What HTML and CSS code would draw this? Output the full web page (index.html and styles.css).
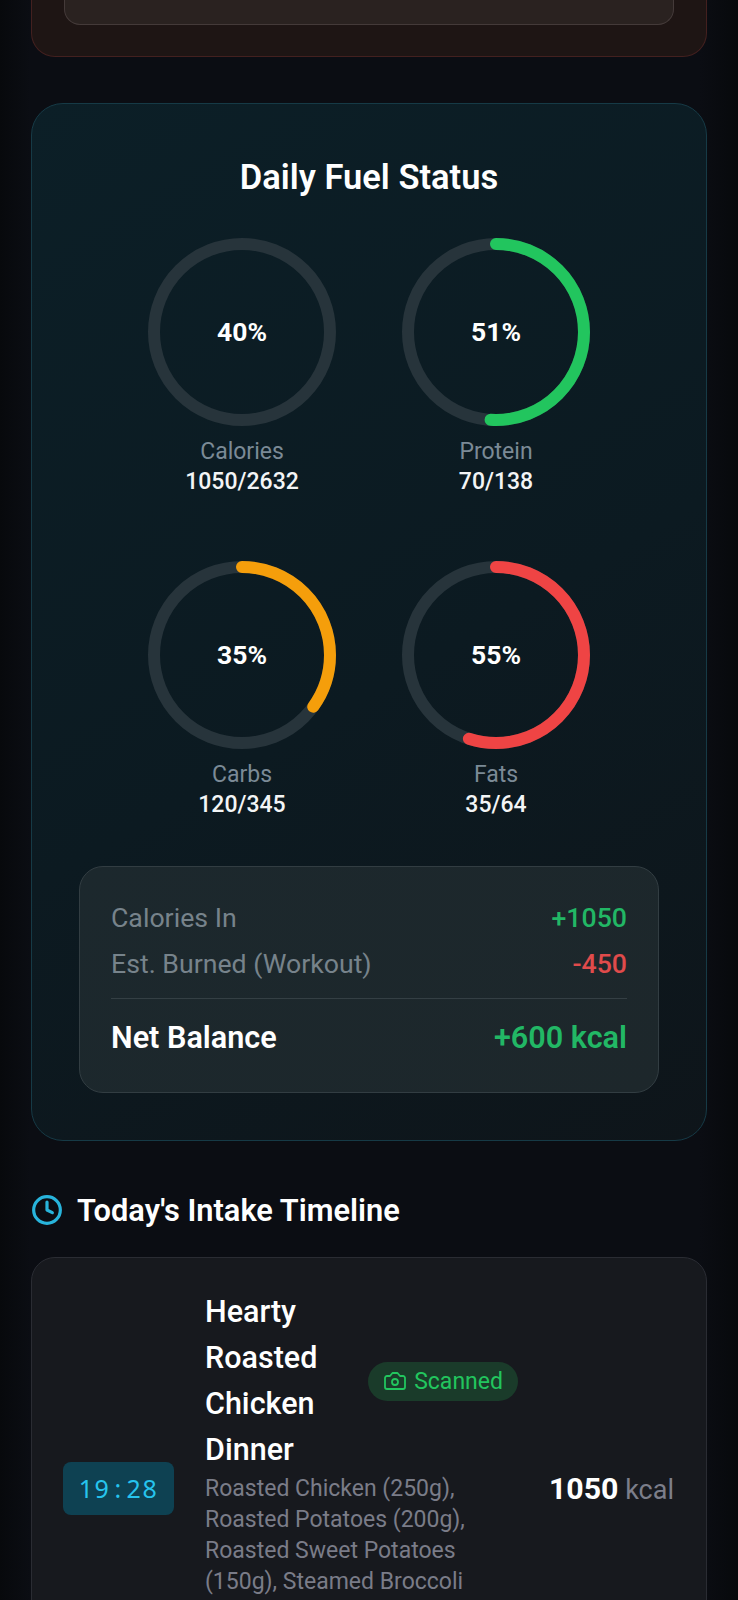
FILE: index.html
```html
<!DOCTYPE html>
<html lang="en">
<head>
    <meta charset="UTF-8">
    <title>Daily Fuel Status</title>
    <link rel="stylesheet" href="styles.css">
</head>
<body>
<div class="page">
    <div class="alert-card">
        <div class="alert-inner"></div>
    </div>

    <section class="fuel-card">
        <h2 class="fuel-title">Daily Fuel Status</h2>
        <div class="rings">
            <div class="ring-item">
                <div class="ring">
                    <svg viewBox="0 0 188 188" width="188" height="188">
                        <circle class="ring-track" cx="94" cy="94" r="88"></circle>
                    </svg>
                    <span class="ring-pct">40%</span>
                </div>
                <div class="ring-label">Calories</div>
                <div class="ring-value">1050/2632</div>
            </div>
            <div class="ring-item">
                <div class="ring">
                    <svg viewBox="0 0 188 188" width="188" height="188">
                        <circle class="ring-track" cx="94" cy="94" r="88"></circle>
                        <circle class="ring-arc arc-green" cx="94" cy="94" r="88" pathLength="100" stroke-dasharray="51 100" transform="rotate(-90 94 94)"></circle>
                    </svg>
                    <span class="ring-pct">51%</span>
                </div>
                <div class="ring-label">Protein</div>
                <div class="ring-value">70/138</div>
            </div>
            <div class="ring-item">
                <div class="ring">
                    <svg viewBox="0 0 188 188" width="188" height="188">
                        <circle class="ring-track" cx="94" cy="94" r="88"></circle>
                        <circle class="ring-arc arc-amber" cx="94" cy="94" r="88" pathLength="100" stroke-dasharray="35 100" transform="rotate(-90 94 94)"></circle>
                    </svg>
                    <span class="ring-pct">35%</span>
                </div>
                <div class="ring-label">Carbs</div>
                <div class="ring-value">120/345</div>
            </div>
            <div class="ring-item">
                <div class="ring">
                    <svg viewBox="0 0 188 188" width="188" height="188">
                        <circle class="ring-track" cx="94" cy="94" r="88"></circle>
                        <circle class="ring-arc arc-red" cx="94" cy="94" r="88" pathLength="100" stroke-dasharray="55 100" transform="rotate(-90 94 94)"></circle>
                    </svg>
                    <span class="ring-pct">55%</span>
                </div>
                <div class="ring-label">Fats</div>
                <div class="ring-value">35/64</div>
            </div>
        </div>

        <div class="balance">
            <div class="balance-row">
                <span class="balance-name">Calories In</span>
                <span class="balance-num green">+1050</span>
            </div>
            <div class="balance-row">
                <span class="balance-name">Est. Burned (Workout)</span>
                <span class="balance-num red">-450</span>
            </div>
            <div class="balance-net">
                <span>Net Balance</span>
                <span class="green">+600 kcal</span>
            </div>
        </div>
    </section>

    <h2 class="timeline-title">
        <svg class="clock" viewBox="0 0 24 24" width="32" height="32">
            <circle cx="12" cy="12" r="10"></circle>
            <path d="M12 6v6l4 2"></path>
        </svg>
        Today's Intake Timeline
    </h2>

    <section class="meal-card">
        <div class="meal-time">19<span class="colon">:</span>28</div>
        <div class="meal-body">
            <div class="meal-head">
                <div class="meal-name">Hearty Roasted Chicken Dinner</div>
                <div class="badge">
                    <svg viewBox="0 0 24 24" width="24" height="24">
                        <path d="M14.5 4h-5L7 7H4a2 2 0 0 0-2 2v9a2 2 0 0 0 2 2h16a2 2 0 0 0 2-2V9a2 2 0 0 0-2-2h-3l-2.500-3z"></path>
                        <circle cx="12" cy="13" r="3"></circle>
                    </svg>
                    Scanned
                </div>
            </div>
            <div class="meal-desc">Roasted Chicken (250g), Roasted Potatoes (200g), Roasted Sweet Potatoes (150g), Steamed Broccoli</div>
        </div>
        <div class="meal-kcal"><b>1050</b> kcal</div>
    </section>
</div>
</body>
</html>
```

FILE: styles.css
```css
* {
    margin: 0;
    padding: 0;
    box-sizing: border-box;
}
html, body {
    height: 1600px;
    overflow: hidden;
}
body {
    font-family: Roboto, "Noto Sans", sans-serif;
    color: #fff;
    background: linear-gradient(90deg, #07090c 0, #0b0d13 30px, #0b0d13 700px, #07090c 100%);
}
.page {
    padding: 0 31px;
}

/* card scrolled off the top */
.alert-card {
    height: 57px;
    padding: 0 32px;
    border: 1px solid #43201f;
    border-top: 0;
    border-radius: 0 0 24px 24px;
    background: #1e1514;
}
.alert-inner {
    height: 25px;
    border: 1px solid #443a39;
    border-top: 0;
    border-radius: 0 0 16px 16px;
    background: #2a2220;
}

.fuel-card {
    height: 1038px;
    margin-top: 46px;
    padding: 52px 47px 0;
    border: 1px solid #163a46;
    border-radius: 32px;
    background: linear-gradient(150deg, #0c1f27 0%, #0c1a21 55%, #0e151a 100%);
}
.fuel-title {
    font-size: 34.500px;
    font-weight: 600;
    line-height: 42px;
    text-align: center;
}
.rings {
    display: grid;
    grid-template-columns: 188px 188px;
    column-gap: 66px;
    row-gap: 65px;
    justify-content: center;
    margin-top: 40px;
}
.ring-item {
    text-align: center;
}
.ring {
    position: relative;
    width: 188px;
    height: 188px;
}
.ring svg {
    display: block;
    fill: none;
}
.ring-track {
    stroke: #27343b;
    stroke-width: 12;
}
.ring-arc {
    stroke-width: 12;
    stroke-linecap: round;
}
.arc-green {
    stroke: #22c55e;
}
.arc-amber {
    stroke: #f59e0b;
}
.arc-red {
    stroke: #ef4444;
}
.ring-pct {
    position: absolute;
    inset: 0 0 2px;
    display: flex;
    align-items: center;
    justify-content: center;
    font-size: 26.500px;
    font-weight: 700;
}
.ring-label {
    margin-top: 10px;
    font-size: 23px;
    line-height: 32px;
    color: #7b8a96;
}
.ring-value {
    font-size: 23px;
    font-weight: 500;
    line-height: 28px;
    color: #f3f5f6;
}

.balance {
    height: 227px;
    margin-top: 47px;
    padding: 28px 31px 0;
    border: 1px solid #323d42;
    border-radius: 24px;
    background: linear-gradient(135deg, #1c282d, #1d272b);
}
.balance-row {
    display: flex;
    justify-content: space-between;
    height: 46px;
    font-size: 26.700px;
    line-height: 46px;
}
.balance-name {
    color: #77838b;
}
.balance-num {
    font-weight: 500;
}
.balance-net {
    display: flex;
    justify-content: space-between;
    margin-top: 11px;
    padding-top: 17px;
    border-top: 1px solid #343f44;
    font-size: 30.600px;
    font-weight: 600;
    line-height: 44px;
}
.green {
    color: #22b765;
}
.red {
    color: #e04b4b;
}

.timeline-title {
    display: flex;
    align-items: center;
    gap: 14px;
    height: 40px;
    margin-top: 49px;
    font-size: 30.800px;
    font-weight: 600;
}
.clock {
    flex: none;
    fill: none;
    stroke: #28b4dc;
    stroke-width: 2.400;
    stroke-linecap: round;
    stroke-linejoin: round;
}

.meal-card {
    display: flex;
    align-items: center;
    gap: 31px;
    min-height: 462px;
    margin-top: 27px;
    padding: 31px 32px 31px 31px;
    border: 1px solid #2a2c33;
    border-radius: 24px;
    background: #17191e;
}
.meal-time {
    flex: none;
    width: 111px;
    height: 53px;
    border-radius: 8px;
    background: #0e4152;
    color: #26c4ee;
    font-family: "Noto Sans", sans-serif;
    font-size: 25px;
    line-height: 53px;
    text-align: center;
    letter-spacing: 1.500px;
}
.colon {
    margin: 0 4px;
}
.meal-body {
    flex: 1;
    align-self: flex-start;
    min-width: 0;
}
.meal-head {
    display: flex;
    align-items: center;
    gap: 15px;
}
.meal-name {
    flex: 1;
    min-width: 0;
    font-size: 30.500px;
    font-weight: 500;
    line-height: 46px;
}
.badge {
    display: flex;
    flex: none;
    align-items: center;
    gap: 7px;
    height: 39px;
    padding: 0 15px;
    border-radius: 20px;
    background: #1a3b2a;
    color: #22c55e;
    font-size: 23px;
    white-space: nowrap;
}
.badge svg {
    flex: none;
    fill: none;
    stroke: currentColor;
    stroke-width: 1.800;
    stroke-linecap: round;
    stroke-linejoin: round;
}
.meal-desc {
    font-size: 23px;
    line-height: 31px;
    color: #7a7c88;
}
.meal-kcal {
    flex: none;
    font-size: 27px;
    color: #7c7e8a;
    white-space: nowrap;
}
.meal-kcal b {
    font-size: 30.300px;
    font-weight: 700;
    color: #fff;
}
```
